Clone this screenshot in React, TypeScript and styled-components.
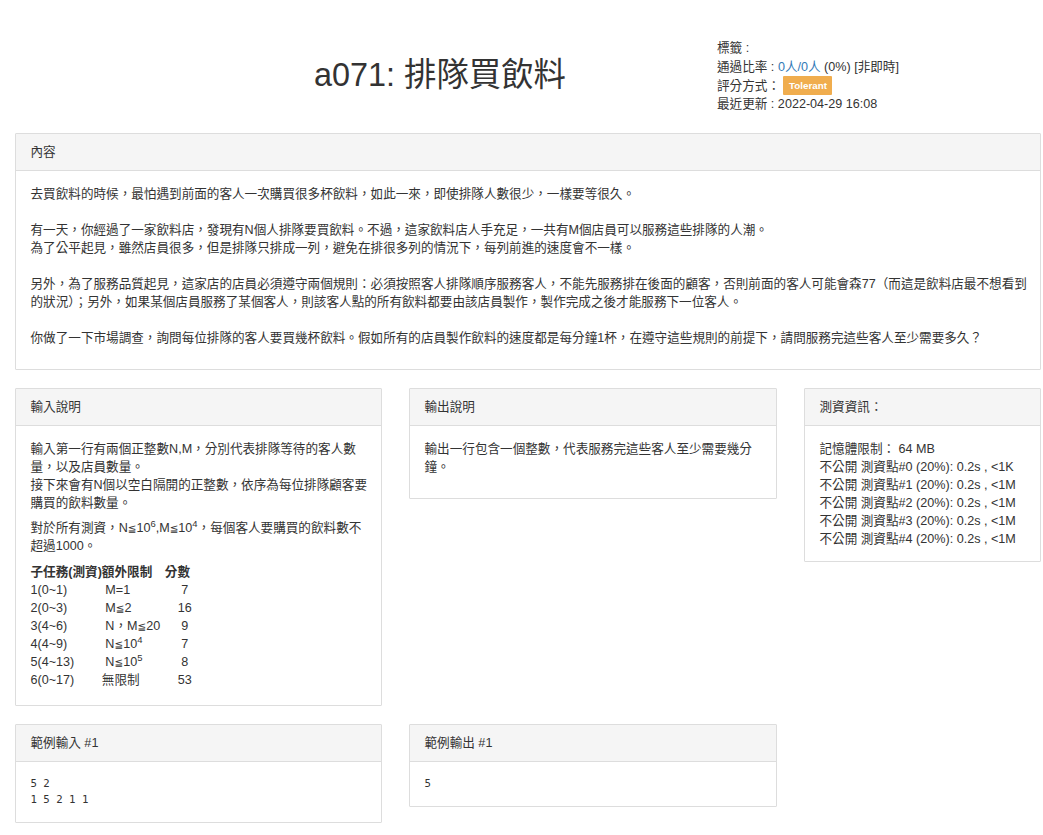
import React from "react";
import styled, { createGlobalStyle } from "styled-components";

const GlobalStyle = createGlobalStyle`
  html, body { margin: 0; padding: 0; background: #fff; }
  body {
    font-family: "Liberation Sans", "Noto Sans CJK TC", sans-serif;
    font-size: 12.6px;
    line-height: 18px;
    color: #333;
  }
`;

const Page = styled.div`
  padding: 0 2px 0 15px;
`;

const Header = styled.header`
  display: flex;
  align-items: flex-start;
  padding-top: 39px;
  margin-bottom: 19px;
`;

const Title = styled.h1`
  flex: 0 0 702px;
  box-sizing: border-box;
  margin: 18px 0 0;
  padding-left: 148px;
  text-align: center;
  font-size: 32.4px;
  line-height: 36px;
  font-weight: 400;
  color: #333;
`;

const Info = styled.div`
  display: flex;
  flex-direction: column;
  line-height: 18.75px;
`;

const InfoLine = styled.div`
  white-space: nowrap;
  height: 18.75px;
`;

const Link = styled.a`
  color: #337ab7;
  text-decoration: none;
`;

const Badge = styled.span`
  display: inline-block;
  vertical-align: middle;
  margin-top: -1px;
  height: 19px;
  line-height: 19px;
  padding: 0 5.5px;
  background: #f0ad4e;
  color: #fff;
  font-weight: 700;
  font-size: 9.8px;
  border-radius: 1px;
`;

const Row = styled.div<{ $cols?: string }>`
  display: grid;
  grid-template-columns: ${(p) => p.$cols || "1fr"};
  column-gap: 27px;
  align-items: start;
`;

const Panel = styled.section`
  border: 1px solid #ddd;
  border-radius: 1px;
  background: #fff;
  margin-bottom: 18px;
`;

const PanelHeading = styled.div`
  background: #f5f5f5;
  border-bottom: 1px solid #ddd;
  padding: 9px 14.5px;
  line-height: 18px;
`;

const PanelBody = styled.div`
  padding: 13.5px 14.5px;
`;

const Text = styled.p<{ $gap?: number }>`
  margin: 0 0 ${(p) => (p.$gap ?? 9)}px;
  white-space: nowrap;
  line-height: 18px;
`;

const Sup = styled.sup`
  font-size: 75%;
  line-height: 0;
  position: relative;
  vertical-align: baseline;
  top: -0.5em;
`;

const Leq = styled.span`
  font-family: "DejaVu Sans", sans-serif;
  font-size: 0.82em;
`;

const Table = styled.table`
  border-collapse: collapse;
  border-spacing: 0;
  margin-bottom: 3px;
`;

const Th = styled.th<{ $w: number }>`
  width: ${(p) => p.$w}px;
  padding: 0;
  text-align: left;
  font-weight: 700;
  line-height: 18px;
  white-space: nowrap;
`;

const Td = styled.td<{ $indent?: boolean; $center?: boolean }>`
  padding: 0 0 0 ${(p) => (p.$indent ? "3.5px" : "0")};
  text-align: ${(p) => (p.$center ? "center" : "left")};
  line-height: 18px;
  white-space: nowrap;
`;

const Pre = styled.pre`
  margin: 0;
  padding: 0;
  font-family: "DejaVu Sans Mono", monospace;
  font-size: 10.7px;
  line-height: 16.7px;
  color: #333;
`;

const subtasks: [string, React.ReactNode, string, boolean][] = [
  ["1(0~1)", "M=1", "7", true],
  ["2(0~3)", <>M<Leq>≦</Leq>2</>, "16", true],
  ["3(4~6)", <>N，M<Leq>≦</Leq>20</>, "9", true],
  ["4(4~9)", <>N<Leq>≦</Leq>10<Sup>4</Sup></>, "7", true],
  ["5(4~13)", <>N<Leq>≦</Leq>10<Sup>5</Sup></>, "8", true],
  ["6(0~17)", "無限制", "53", false],
];

const tests = ["#0", "#1", "#2", "#3", "#4"];

export default function App() {
  return (
    <>
      <GlobalStyle />
      <Page>
        <Header>
          <Title>a071: 排隊買飲料</Title>
          <Info>
            <InfoLine>標籤 : </InfoLine>
            <InfoLine>
              通過比率 : <Link href="#">0人/0人</Link> (0%) [非即時]
            </InfoLine>
            <InfoLine>
              評分方式： <Badge>Tolerant</Badge>
            </InfoLine>
            <InfoLine>最近更新 : 2022-04-29 16:08</InfoLine>
          </Info>
        </Header>

        <Panel>
          <PanelHeading>內容</PanelHeading>
          <PanelBody>
            <Text>
              去買飲料的時候，最怕遇到前面的客人一次購買很多杯飲料，如此一來，即使排隊人數很少，一樣要等很久。
              <br />
              <br />
              有一天，你經過了一家飲料店，發現有N個人排隊要買飲料。不過，這家飲料店人手充足，一共有M個店員可以服務這些排隊的人潮。
              <br />
              為了公平起見，雖然店員很多，但是排隊只排成一列，避免在排很多列的情況下，每列前進的速度會不一樣。
              <br />
              <br />
              另外，為了服務品質起見，這家店的店員必須遵守兩個規則：必須按照客人排隊順序服務客人，不能先服務排在後面的顧客，否則前面的客人可能會森77（而這是飲料店最不想看到
              <br />
              的狀況）；另外，如果某個店員服務了某個客人，則該客人點的所有飲料都要由該店員製作，製作完成之後才能服務下一位客人。
              <br />
              <br />
              你做了一下市場調查，詢問每位排隊的客人要買幾杯飲料。假如所有的店員製作飲料的速度都是每分鐘1杯，在遵守這些規則的前提下，請問服務完這些客人至少需要多久？
            </Text>
          </PanelBody>
        </Panel>

        <Row $cols="367px 368px 237px">
          <Panel>
            <PanelHeading>輸入說明</PanelHeading>
            <PanelBody>
              <Text $gap={7.5}>
                輸入第一行有兩個正整數N,M，分別代表排隊等待的客人數
                <br />
                量，以及店員數量。
                <br />
                接下來會有N個以空白隔開的正整數，依序為每位排隊顧客要
                <br />
                購買的飲料數量。
              </Text>
              <Text $gap={7.5}>
                對於所有測資，N<Leq>≦</Leq>10<Sup>6</Sup>,M<Leq>≦</Leq>10<Sup>4</Sup>，每個客人要購買的飲料數不
                <br />
                超過1000。
              </Text>
              <Table>
                <thead>
                  <tr>
                    <Th $w={71}>子任務(測資)</Th>
                    <Th $w={63}>額外限制</Th>
                    <Th $w={40}>分數</Th>
                  </tr>
                </thead>
                <tbody>
                  {subtasks.map(([a, b, c, ind]) => (
                    <tr key={a}>
                      <Td>{a}</Td>
                      <Td $indent={ind}>{b}</Td>
                      <Td $center>{c}</Td>
                    </tr>
                  ))}
                </tbody>
              </Table>
            </PanelBody>
          </Panel>

          <Panel>
            <PanelHeading>輸出說明</PanelHeading>
            <PanelBody>
              <Text>
                輸出一行包含一個整數，代表服務完這些客人至少需要幾分
                <br />
                鐘。
              </Text>
            </PanelBody>
          </Panel>

          <Panel>
            <PanelHeading>測資資訊：</PanelHeading>
            <PanelBody>
              <Text $gap={0}>
                記憶體限制： 64 MB
                {tests.map((t, i) => (
                  <React.Fragment key={t}>
                    <br />
                    不公開 測資點{t} (20%): 0.2s , &lt;{i === 0 ? "1K" : "1M"}
                  </React.Fragment>
                ))}
              </Text>
            </PanelBody>
          </Panel>
        </Row>

        <Row $cols="367px 368px 237px">
          <Panel>
            <PanelHeading>範例輸入 #1</PanelHeading>
            <PanelBody>
              <Pre>{"5 2\n1 5 2 1 1"}</Pre>
            </PanelBody>
          </Panel>
          <Panel>
            <PanelHeading>範例輸出 #1</PanelHeading>
            <PanelBody>
              <Pre>{"5"}</Pre>
            </PanelBody>
          </Panel>
        </Row>
      </Page>
    </>
  );
}
